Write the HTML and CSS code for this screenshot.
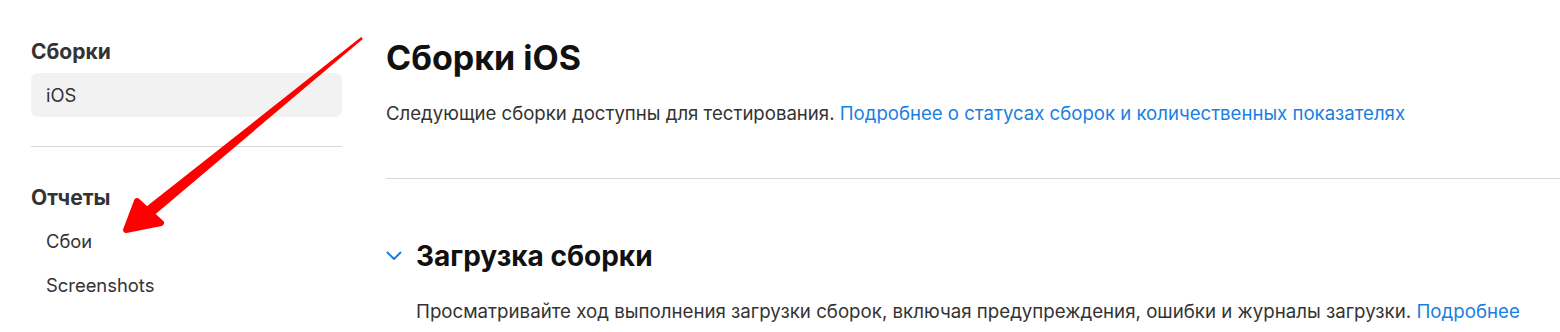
FILE: index.html
```html
<!DOCTYPE html>
<html lang="ru">
<head>
<meta charset="utf-8">
<title>Сборки iOS</title>
<link rel="stylesheet" href="styles.css">
</head>
<body>
<div class="page">
  <aside class="sidebar">
    <h3 class="side-title">Сборки</h3>
    <div class="side-item active">iOS</div>
    <hr class="side-divider">
    <h3 class="side-title reports">Отчеты</h3>
    <div class="side-item">Сбои</div>
    <div class="side-item">Screenshots</div>
  </aside>
  <main class="main">
    <h1 class="title">Сборки iOS</h1>
    <p class="lead">Следующие сборки доступны для тестирования. <a href="#">Подробнее о статусах сборок и количественных показателях</a></p>
    <hr class="main-divider">
    <section class="section">
      <h2 class="section-title">
        <svg class="chevron" width="16" height="10" viewBox="0 0 16 10"><path d="M1.5 1.5 L8 8 L14.5 1.5" fill="none" stroke="#1a7fe0" stroke-width="2" stroke-linecap="round" stroke-linejoin="round"/></svg>
        <span>Загрузка сборки</span>
      </h2>
      <p class="section-text">Просматривайте ход выполнения загрузки сборок, включая предупреждения, ошибки и журналы загрузки. <a href="#">Подробнее</a></p>
    </section>
  </main>
</div>
<svg class="arrow" width="1560" height="332" viewBox="0 0 1560 332">
  <polygon points="362.8,38.9 361.2,37.1 145.3,207.5 152.7,216.5" fill="#ff0000"/>
  <polygon points="126,230 137,201 161,223" fill="#ff0000" stroke="#ff0000" stroke-width="6" stroke-linejoin="round"/>
</svg>
</body>
</html>
```

FILE: styles.css
```css
html, body {
  margin: 0;
  padding: 0;
  background: #ffffff;
  font-family: "Inter", "Liberation Sans", sans-serif;
  color: #333333;
  overflow: hidden;
}

.page {
  display: grid;
  grid-template-columns: 311px 1fr;
  column-gap: 44px;
  padding-left: 31px;
  width: 1560px;
  box-sizing: border-box;
}

.sidebar {
  padding-top: 39px;
}

.side-title {
  margin: 0;
  font-size: 21px;
  line-height: 26px;
  font-weight: 700;
  color: #333333;
}

.side-item {
  font-size: 18.4px;
  line-height: 24px;
  padding: 10px 15px;
  color: #333333;
  border-radius: 7px;
}

.side-item.active {
  margin-top: 8px;
  background: #f2f2f2;
}

.side-divider {
  border: 0;
  border-top: 1px solid #d9d9d9;
  margin: 29px 0 0 0;
}

.reports {
  margin-top: 38px;
}

.sidebar .reports + .side-item {
  margin-top: 8px;
}

.main {
  padding-top: 38px;
}

.title {
  margin: 0;
  font-size: 34px;
  line-height: 40px;
  font-weight: 700;
  color: #111111;
}

.lead {
  margin: 23px 0 0 0;
  font-size: 18.6px;
  line-height: 24px;
  color: #333333;
}

a {
  color: #1a7fe0;
  text-decoration: none;
}

.main-divider {
  border: 0;
  border-top: 1px solid #d9d9d9;
  margin: 53px 0 0 0;
}

.section {
  padding-left: 30px;
}

.section-title {
  position: relative;
  margin: 60px 0 0 0;
  font-size: 28px;
  line-height: 34px;
  font-weight: 700;
  color: #111111;
}

.chevron {
  position: absolute;
  left: -30px;
  top: 12px;
}

.section-text {
  margin: 27px 0 0 0;
  font-size: 18.7px;
  line-height: 24px;
  color: #333333;
}

.arrow {
  position: absolute;
  left: 0;
  top: 0;
  pointer-events: none;
}
```
